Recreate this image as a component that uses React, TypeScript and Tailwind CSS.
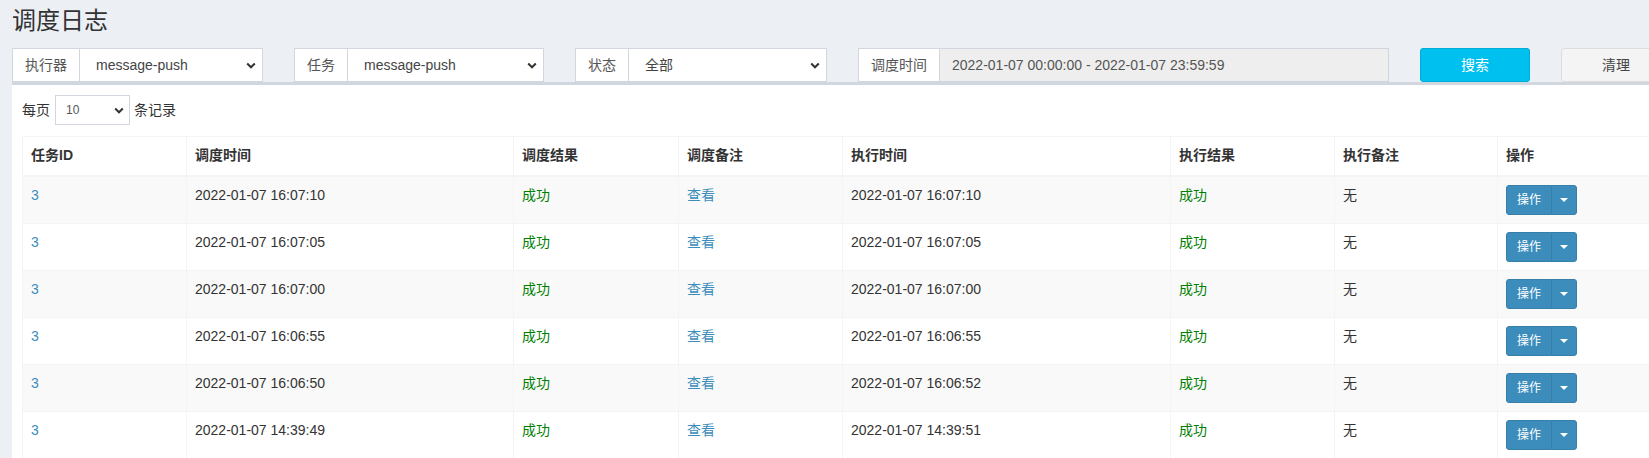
const LOGS = [
  { trigger: "2022-01-07 16:07:10", handle: "2022-01-07 16:07:10" },
  { trigger: "2022-01-07 16:07:05", handle: "2022-01-07 16:07:05" },
  { trigger: "2022-01-07 16:07:00", handle: "2022-01-07 16:07:00" },
  { trigger: "2022-01-07 16:06:55", handle: "2022-01-07 16:06:55" },
  { trigger: "2022-01-07 16:06:50", handle: "2022-01-07 16:06:52" },
  { trigger: "2022-01-07 14:39:49", handle: "2022-01-07 14:39:51" },
];

const HEADERS = ["任务ID", "调度时间", "调度结果", "调度备注", "执行时间", "执行结果", "执行备注", "操作"];
const WIDTHS = ["w-[164px]", "w-[327px]", "w-[165px]", "w-[164px]", "w-[328px]", "w-[164px]", "w-[163px]", "w-[164px]"];

function Chevron() {
  return (
    <svg width="10" height="7" viewBox="0 0 10 7" className="shrink-0">
      <path d="M1.2 1.5l3.8 3.8 3.8-3.8" fill="none" stroke="#333" strokeWidth="2" />
    </svg>
  );
}

function SelectGroup({ label, value, width }: { label: string; value: string; width: string }) {
  return (
    <div className={`flex h-[34px] ${width}`}>
      <span className="flex items-center px-3 bg-white border border-r-0 border-[#d2d6de] text-[#555]">{label}</span>
      <div className="flex-1 flex items-center justify-between pl-4 pr-[6px] bg-white border border-[#d2d6de] text-[#444]">
        <span>{value}</span>
        <Chevron />
      </div>
    </div>
  );
}

export default function App() {
  return (
    <div className="w-[1649px] h-[458px] overflow-hidden bg-[#ecf0f5] text-[14px] text-[#333] font-['Liberation_Sans','Noto_Sans_CJK_SC',sans-serif]">
      <div className="w-[1700px] pt-[8px]">
        <h1 className="ml-3 text-[24px] leading-[26px] text-[#333]">调度日志</h1>

        <div className="flex mt-[14px]">
          <div className="ml-3">
            <SelectGroup label="执行器" value="message-push" width="w-[251px]" />
          </div>
          <div className="ml-[31px]">
            <SelectGroup label="任务" value="message-push" width="w-[250px]" />
          </div>
          <div className="ml-[31px]">
            <SelectGroup label="状态" value="全部" width="w-[252px]" />
          </div>
          <div className="ml-[31px] flex h-[34px] w-[531px]">
            <span className="flex items-center px-3 bg-white border border-r-0 border-[#d2d6de] text-[#555]">调度时间</span>
            <div className="flex-1 flex items-center px-3 bg-[#eee] border border-[#d2d6de] text-[#555]">
              2022-01-07 00:00:00 - 2022-01-07 23:59:59
            </div>
          </div>
          <button className="ml-[31px] w-[110px] h-[34px] rounded-[3px] bg-[#00c0ef] border border-[#00acd6] text-white">搜索</button>
          <button className="ml-[31px] w-[110px] h-[34px] rounded-[3px] bg-[#f4f4f4] border border-[#ddd] text-[#444]">清理</button>
        </div>

        <div className="ml-3 w-[1661px] bg-white border-t-[3px] border-[#d2d6de] p-[10px]">
          <div className="flex items-center h-[30px] gap-[5px]">
            <span>每页</span>
            <div className="w-[75px] h-[30px] flex items-center justify-between pl-[10px] pr-[5px] border border-[#d2d6de] text-[12px] text-[#555]">
              <span>10</span>
              <Chevron />
            </div>
            <span className="ml-[-1px]">条记录</span>
          </div>

          <table className="mt-[11px] table-fixed border-collapse w-[1639px]">
            <colgroup>
              {WIDTHS.map((w, i) => (
                <col key={i} className={w} />
              ))}
            </colgroup>
            <thead>
              <tr>
                {HEADERS.map((h) => (
                  <th key={h} className="text-left font-bold leading-[20px] px-2 pt-2 pb-[10px] border border-b-2 border-[#f4f4f4]">
                    {h}
                  </th>
                ))}
              </tr>
            </thead>
            <tbody>
              {LOGS.map((log, i) => (
                <tr key={i} className={i % 2 === 0 ? "bg-[#f9f9f9]" : "bg-white"}>
                  <td className="align-top leading-[20px] p-2 border border-[#f4f4f4] text-[#3c8dbc]">3</td>
                  <td className="align-top leading-[20px] p-2 border border-[#f4f4f4]">{log.trigger}</td>
                  <td className="align-top leading-[20px] p-2 border border-[#f4f4f4] text-[#008000]">成功</td>
                  <td className="align-top leading-[20px] p-2 border border-[#f4f4f4] text-[#3c8dbc]">查看</td>
                  <td className="align-top leading-[20px] p-2 border border-[#f4f4f4]">{log.handle}</td>
                  <td className="align-top leading-[20px] p-2 border border-[#f4f4f4] text-[#008000]">成功</td>
                  <td className="align-top leading-[20px] p-2 border border-[#f4f4f4]">无</td>
                  <td className="align-top leading-[20px] p-2 border border-[#f4f4f4]">
                    <div className="inline-flex h-[30px] text-[12px] text-white">
                      <span className="flex items-center px-[10px] bg-[#3c8dbc] border border-[#367fa9] rounded-l-[3px]">操作</span>
                      <span className="-ml-px flex items-center px-[8px] bg-[#3c8dbc] border border-[#367fa9] rounded-r-[3px]">
                        <span className="w-0 h-0 border-x-[4px] border-x-transparent border-t-[4px] border-t-white" />
                      </span>
                    </div>
                  </td>
                </tr>
              ))}
            </tbody>
          </table>
        </div>
      </div>
    </div>
  );
}
